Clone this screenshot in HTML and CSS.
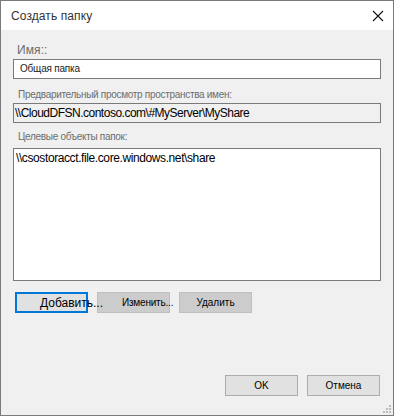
FILE: index.html
```html
<!DOCTYPE html>
<html lang="ru">
<head>
<meta charset="utf-8">
<title>Создать папку</title>
<link rel="stylesheet" href="styles.css">
</head>
<body>
	<div class="window">
		<!-- title bar -->
		<div class="titlebar">
			<span class="title">Создать папку</span>
			<span class="close">
				<svg width="12" height="12" viewBox="0 0 12 12"><path d="M1 1L11 11M11 1L1 11" stroke="#111" stroke-width="1.1" fill="none"/></svg>
			</span>
		</div>

		<!-- content -->
		<div class="content">
			<div class="label big">Имя::</div>
			<div class="field">Общая папка</div>

			<div class="label second">Предварительный просмотр пространства имен:</div>
			<div class="field preview">\\CloudDFSN.contoso.com\#MyServer\MyShare</div>

			<div class="label third">Целевые объекты папок:</div>
			<div class="listbox">
				<div class="item">\\csostoracct.file.core.windows.net\share</div>
			</div>

			<div class="actions">
				<div class="btn focused">Добавить...</div>
				<div class="btn grey edit">Изменить...</div>
				<div class="btn grey">Удалить</div>
			</div>

			<div class="footer">
				<div class="btn">OK</div>
				<div class="btn">Отмена</div>
			</div>
		</div>

		<svg class="grip" width="9" height="9" viewBox="0 0 9 9">
			<rect x="6" y="0" width="2" height="2" fill="#bcbcbc"/>
			<rect x="3" y="3" width="2" height="2" fill="#bcbcbc"/>
			<rect x="6" y="3" width="2" height="2" fill="#bcbcbc"/>
			<rect x="0" y="6" width="2" height="2" fill="#bcbcbc"/>
			<rect x="3" y="6" width="2" height="2" fill="#bcbcbc"/>
			<rect x="6" y="6" width="2" height="2" fill="#bcbcbc"/>
		</svg>
	</div>
</body>
</html>
```

FILE: styles.css
```css
body {
	margin: 0;
	font: 10px "Liberation Sans", Arial, sans-serif;
	color: #000;
}

.window {
	position: relative;
	box-sizing: border-box;
	width: 394px;
	height: 416px;
	border: 1px solid #7a7a7a;
	background: #f0f0f0;
	display: flex;
	flex-direction: column;
}

.titlebar {
	height: 29px;
	background: #fff;
	display: flex;
	align-items: center;
	justify-content: space-between;
	padding: 0 10px 0 10px;
}

.title {
	font-size: 12px;
	color: #333;
	letter-spacing: 0.1px;
}

.close {
	display: flex;
	width: 12px;
	height: 12px;
	margin-right: -1px;
}

.content {
	flex: 1;
	display: flex;
	flex-direction: column;
	padding: 12px 12px 19px 12px;
}

.label {
	color: #6d6d6d;
	line-height: 14px;
	padding-left: 5px;
	letter-spacing: -0.3px;
}

.label.big {
	font-size: 12px;
	line-height: 16px;
	padding-left: 4px;
	margin-bottom: 1px;
	letter-spacing: 0.1px;
}

.label.second {
	margin-top: 9px;
	margin-bottom: 1px;
}

.label.third {
	margin-top: 7px;
	margin-bottom: 4px;
}

.field {
	box-sizing: border-box;
	height: 20px;
	border: 1px solid #7a7a7a;
	background: #fff;
	padding-left: 6px;
	line-height: 18px;
	color: #222;
	letter-spacing: -0.2px;
}

.field.preview {
	background: #f0f0f0;
	font-size: 12px;
	padding-left: 1px;
	color: #000;
	letter-spacing: -0.5px;
}

.listbox {
	box-sizing: border-box;
	height: 133px;
	border: 1px solid #7a7a7a;
	background: #fff;
}

.item {
	font-size: 12px;
	padding: 2px 0 0 2px;
	line-height: 14px;
	letter-spacing: -0.4px;
}

.actions {
	display: flex;
	gap: 9px;
	margin-top: 11px;
	padding-left: 2px;
}

.footer {
	display: flex;
	justify-content: flex-end;
	gap: 9px;
	margin-top: auto;
	padding-right: 1px;
}

.btn {
	box-sizing: border-box;
	width: 73px;
	height: 21px;
	border: 1px solid #adadad;
	background: #e1e1e1;
	font-size: 10px;
	letter-spacing: 0;
	white-space: nowrap;
	display: flex;
	align-items: center;
	justify-content: center;
}

.btn.grey {
	background: #cccccc;
	border-color: #bfbfbf;
}

.btn.edit {
	justify-content: flex-start;
	padding-left: 24px;
	letter-spacing: -0.2px;
}

.btn.focused {
	position: relative;
	z-index: 1;
	border: 2px solid #0078d7;
	font-size: 12px;
	justify-content: flex-start;
	padding-left: 23px;
}

.grip {
	position: absolute;
	right: 1px;
	bottom: 1px;
}
```
